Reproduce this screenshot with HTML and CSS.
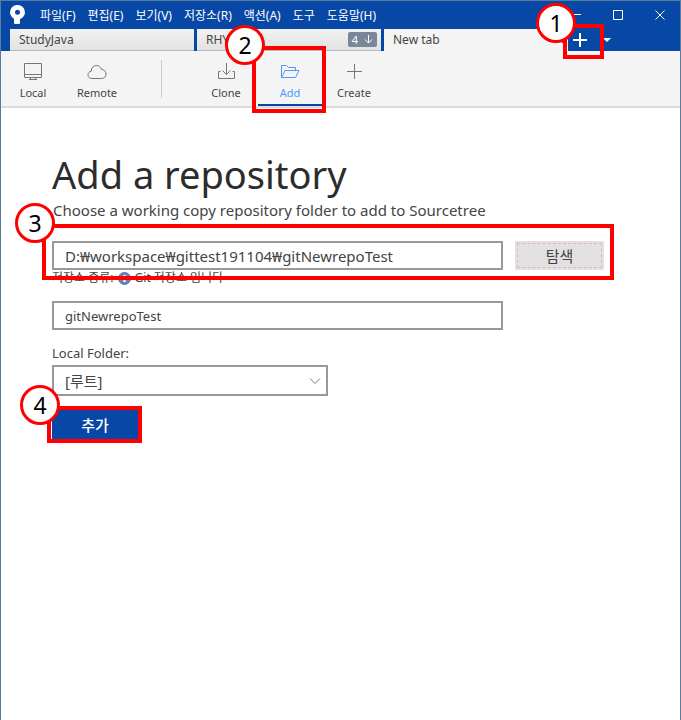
FILE: index.html
```html
<!DOCTYPE html>
<html lang="ko">
<head>
  <meta charset="UTF-8">
  <meta name="viewport" content="width=device-width, initial-scale=1.0">
  <title>Sourcetree</title>
  <link rel="stylesheet" href="styles.css">
</head>
<body>
  <div class="window">
    <header class="titlebar">
      <div class="menu-row">
        <svg class="logo" width="16" height="20" viewBox="0 0 16 20">
          <path fill="#fff" fill-rule="evenodd" d="M8.500 0A7.300 7.300 0 0 0 1 7.300c0 2.500 1.500 5 4 6.400V18q0 1 1 1h4q1 0 1-1v-4c3-1 5-3.700 5-6.700A7.400 7.400 0 0 0 8.500 0zM8.500 4.800a2.500 2.500 0 1 1 0 5 2.500 2.500 0 0 1 0-5z"/>
        </svg>
        <nav class="menu">
          <button>파일(F)</button>
          <button>편집(E)</button>
          <button>보기(V)</button>
          <button>저장소(R)</button>
          <button>액션(A)</button>
          <button>도구</button>
          <button>도움말(H)</button>
        </nav>
        <div class="window-buttons">
          <button aria-label="최소화"><svg width="12" height="12" viewBox="0 0 12 12"><path d="M1 5.500h10"/></svg></button>
          <button aria-label="최대화"><svg width="12" height="12" viewBox="0 0 12 12"><path d="M1.500 1.500h9v9h-9z"/></svg></button>
          <button aria-label="닫기"><svg width="12" height="12" viewBox="0 0 12 12"><path d="M1.500 1.500l9 9m0-9l-9 9"/></svg></button>
        </div>
      </div>
      <div class="tabs">
        <button class="tab">StudyJava</button>
        <button class="tab">RHY <span class="tab-badge">4 <svg width="9" height="10" viewBox="0 0 9 10"><path d="M4.500 1v8M1 5.500L4.500 9 8 5.500"/></svg></span></button>
        <button class="tab active">New tab
          <svg class="tab-close" width="9" height="9" viewBox="0 0 9 9"><path d="M1 1l7 7m0-7L1 8"/></svg>
        </button>
        <div class="new-tab">
          <button class="plus" aria-label="새 탭"><svg width="14" height="14" viewBox="0 0 14 14"><path d="M7 0v14M0 7h14"/></svg></button>
          <div class="callout callout-tab"><span class="step">1</span></div>
        </div>
        <button class="tab-list" aria-label="탭 목록"><svg width="8" height="4" viewBox="0 0 8 4"><path fill="#fff" d="M0 0h8L4 4z"/></svg></button>
      </div>
    </header>

    <div class="toolbar">
      <button class="tool">
        <svg width="20" height="20" viewBox="0 0 20 20"><path d="M1.500 2.500h17v14h-17zM1.500 13.500h17M7.500 16.500v2M12.500 16.500v2M6 18.500h8"/></svg>
        Local
      </button>
      <button class="tool">
        <svg width="20" height="20" viewBox="0 0 20 20"><path d="M5 17.500C2.500 17.500 1 16 1 13.800c0-2 1.500-3.400 3.200-3.500C4.200 7 6.500 4.500 9.500 4.500c2.600 0 4.400 1.600 5 4 2.500 0 4.500 2 4.500 4.500 0 2.600-1.800 4.500-4.300 4.500z"/></svg>
        Remote
      </button>
      <span class="divider"></span>
      <button class="tool">
        <svg width="20" height="20" viewBox="0 0 20 20"><path d="M10.500 2v11M6.500 9.500l4 4 4-4M4.500 10.500h-2v7h16v-7h-2"/></svg>
        Clone
      </button>
      <div class="tool-wrap">
        <button class="tool selected">
          <svg width="20" height="20" viewBox="0 0 20 20"><path d="M1.500 16.500v-12h5l2 2h7v3M1.500 16.500l3.500-7h14l-3.500 7z"/></svg>
          Add
        </button>
        <div class="callout callout-tool"><span class="step">2</span></div>
      </div>
      <button class="tool">
        <svg width="20" height="20" viewBox="0 0 20 20"><path d="M10.500 3v15M3 10.500h15"/></svg>
        Create
      </button>
    </div>

    <main class="content">
      <h1>Add a repository</h1>
      <p class="subtitle">Choose a working copy repository folder to add to Sourcetree</p>
      <div class="path-row">
        <input class="field path" type="text" aria-label="Working copy path" value="D:₩workspace₩gittest191104₩gitNewrepoTest">
        <button class="browse">탐색</button>
        <div class="callout callout-path"><span class="step">3</span></div>
      </div>
      <p class="repo-type">저장소 종류: <svg width="13" height="13" viewBox="0 0 13 13"><circle cx="6.500" cy="6.500" r="6" fill="#6688b8" stroke="#53719d"/><path d="M6.500 3v1.500M6.500 6v4" stroke="#fff" stroke-width="2"/></svg> Git 저장소 입니다</p>
      <input class="field" type="text" aria-label="Repository name" value="gitNewrepoTest">
      <label class="folder-label" for="folder">Local Folder:</label>
      <div class="select-wrap">
        <select id="folder" class="field">
          <option>[루트]</option>
        </select>
        <svg class="chevron" width="12" height="8" viewBox="0 0 12 8"><path d="M1 1.500l5 5 5-5"/></svg>
      </div>
      <div class="submit-wrap">
        <button class="submit">추가</button>
        <div class="callout callout-submit"><span class="step">4</span></div>
      </div>
    </main>
  </div>
</body>
</html>
```
FILE: styles.css
```css
* {
  box-sizing: border-box;
}
body {
  margin: 0;
  font-family: "Noto Sans", "Noto Sans CJK KR", sans-serif;
  font-size: 12px;
  color: #444;
  background: #fff;
}
button, input, select {
  font: inherit;
  color: inherit;
  margin: 0;
}
button {
  padding: 0;
  border: none;
  background: none;
}
svg {
  fill: none;
  stroke-width: 1;
}
.window {
  min-height: 100vh;
  border: 1px solid #5b7b9c;
  border-bottom: none;
}

/* title bar */
.titlebar {
  background: #0747a6;
  color: #fff;
}
.menu-row {
  display: flex;
  align-items: center;
  height: 28px;
  padding-left: 8px;
}
.menu {
  display: flex;
  gap: 12px;
  margin-left: 15px;
  white-space: nowrap;
}
.window-buttons {
  display: flex;
  gap: 30px;
  margin-left: auto;
  padding-right: 14px;
}
.window-buttons button {
  display: flex;
}
.window-buttons svg {
  stroke: #fff;
}
.tabs {
  display: flex;
  gap: 3px;
  height: 22px;
  padding-left: 9px;
}
.tab {
  display: flex;
  flex: 0 1 184px;
  align-items: center;
  justify-content: space-between;
  padding: 0 4px 0 9px;
  background: linear-gradient(#f2f2f2, #e2e2e2);
  border-bottom: 1px solid #b4bac4;
  color: #444;
}
.tab.active {
  background: #f4f4f4;
  border-bottom-color: #f4f4f4;
}
.tab-badge {
  padding: 0 4px;
  border-radius: 2px;
  background: #7a869a;
  color: #fff;
  font-size: 11px;
  line-height: 15px;
}
.tab-badge svg {
  margin-left: 3px;
  stroke: #fff;
}
.tab-close {
  stroke: #444;
}
.new-tab {
  position: relative;
  display: flex;
  width: 18px;
}
.plus {
  display: flex;
  align-items: center;
  justify-content: center;
  width: 100%;
}
.plus svg {
  stroke: #fff;
  stroke-width: 2;
}
.tab-list {
  display: flex;
  align-items: center;
  margin-left: 11px;
}

/* toolbar */
.toolbar {
  display: flex;
  height: 57px;
  background: #f4f4f4;
  border-bottom: 2px solid #dcdcdc;
}
.tool {
  display: flex;
  flex-direction: column;
  align-items: center;
  gap: 4px;
  width: 64px;
  height: 55px;
  padding-top: 10px;
  font-size: 11px;
  line-height: 16px;
}
.tool svg {
  stroke: #777;
}
.tool.selected {
  border-bottom: 2px solid #0747a6;
  color: #4c9aff;
}
.tool.selected svg {
  stroke: #4c9aff;
}
.tool-wrap {
  position: relative;
}
.divider {
  width: 1px;
  margin: 9px 32px 8px;
  background: #ccc;
}

/* form */
.content {
  display: flex;
  flex-direction: column;
  align-items: flex-start;
  padding: 42px 76px 42px 51px;
}
h1 {
  margin: 0;
  font-size: 38px;
  font-weight: 400;
  line-height: 48px;
  color: #2c2c2c;
}
.subtitle {
  margin: 2px 0 21px 1px;
  font-size: 15px;
  line-height: 20px;
}
.field {
  width: 451px;
  max-width: 100%;
  height: 29px;
  padding: 0 11px;
  border: 2px solid #999;
  border-radius: 0;
  background: #fff;
  font-size: 13px;
}
.field.path {
  font-size: 15px;
}
.path-row {
  position: relative;
  display: flex;
  gap: 12px;
}
.browse {
  flex: none;
  width: 89px;
  height: 29px;
  border: 2px solid #e1e1e1;
  background: #e1e1e1;
  outline: 1px dashed #eab0cf;
  outline-offset: -3px;
  font-size: 15px;
}
.repo-type {
  display: flex;
  align-items: center;
  gap: 4px;
  margin: 0 0 15px;
  line-height: 16px;
}
.folder-label {
  margin: 13px 0 2px;
  font-size: 13px;
  line-height: 20px;
}
.select-wrap {
  position: relative;
  width: 276px;
  max-width: 100%;
}
.select-wrap .field {
  display: block;
  width: 100%;
  height: 31px;
  appearance: none;
  font-size: 15px;
}
.chevron {
  position: absolute;
  top: 12px;
  right: 7px;
  stroke: #777;
  pointer-events: none;
}
.submit-wrap {
  position: relative;
  margin-top: 14px;
}
.submit {
  width: 86px;
  height: 29px;
  background: #0747a6;
  color: #fff;
  font-size: 15px;
  font-weight: 500;
}

/* numbered red frames */
.callout {
  position: absolute;
  z-index: 1;
  border: 4px solid #f00;
  pointer-events: none;
}
.step {
  position: absolute;
  top: -25px;
  left: -31px;
  width: 40px;
  height: 40px;
  border: 3px solid #f00;
  border-radius: 50%;
  background: #fff;
  color: #000;
  font-size: 23px;
  line-height: 34px;
  text-align: center;
}
.callout-tab {
  inset: -5px -15px -8px -8px;
}
.callout-tool {
  inset: -5px -4px -7px -6px;
}
.callout-path {
  inset: -17px -10px -10px;
}
.callout-submit {
  inset: -4px -4px -4px -5px;
}
```
